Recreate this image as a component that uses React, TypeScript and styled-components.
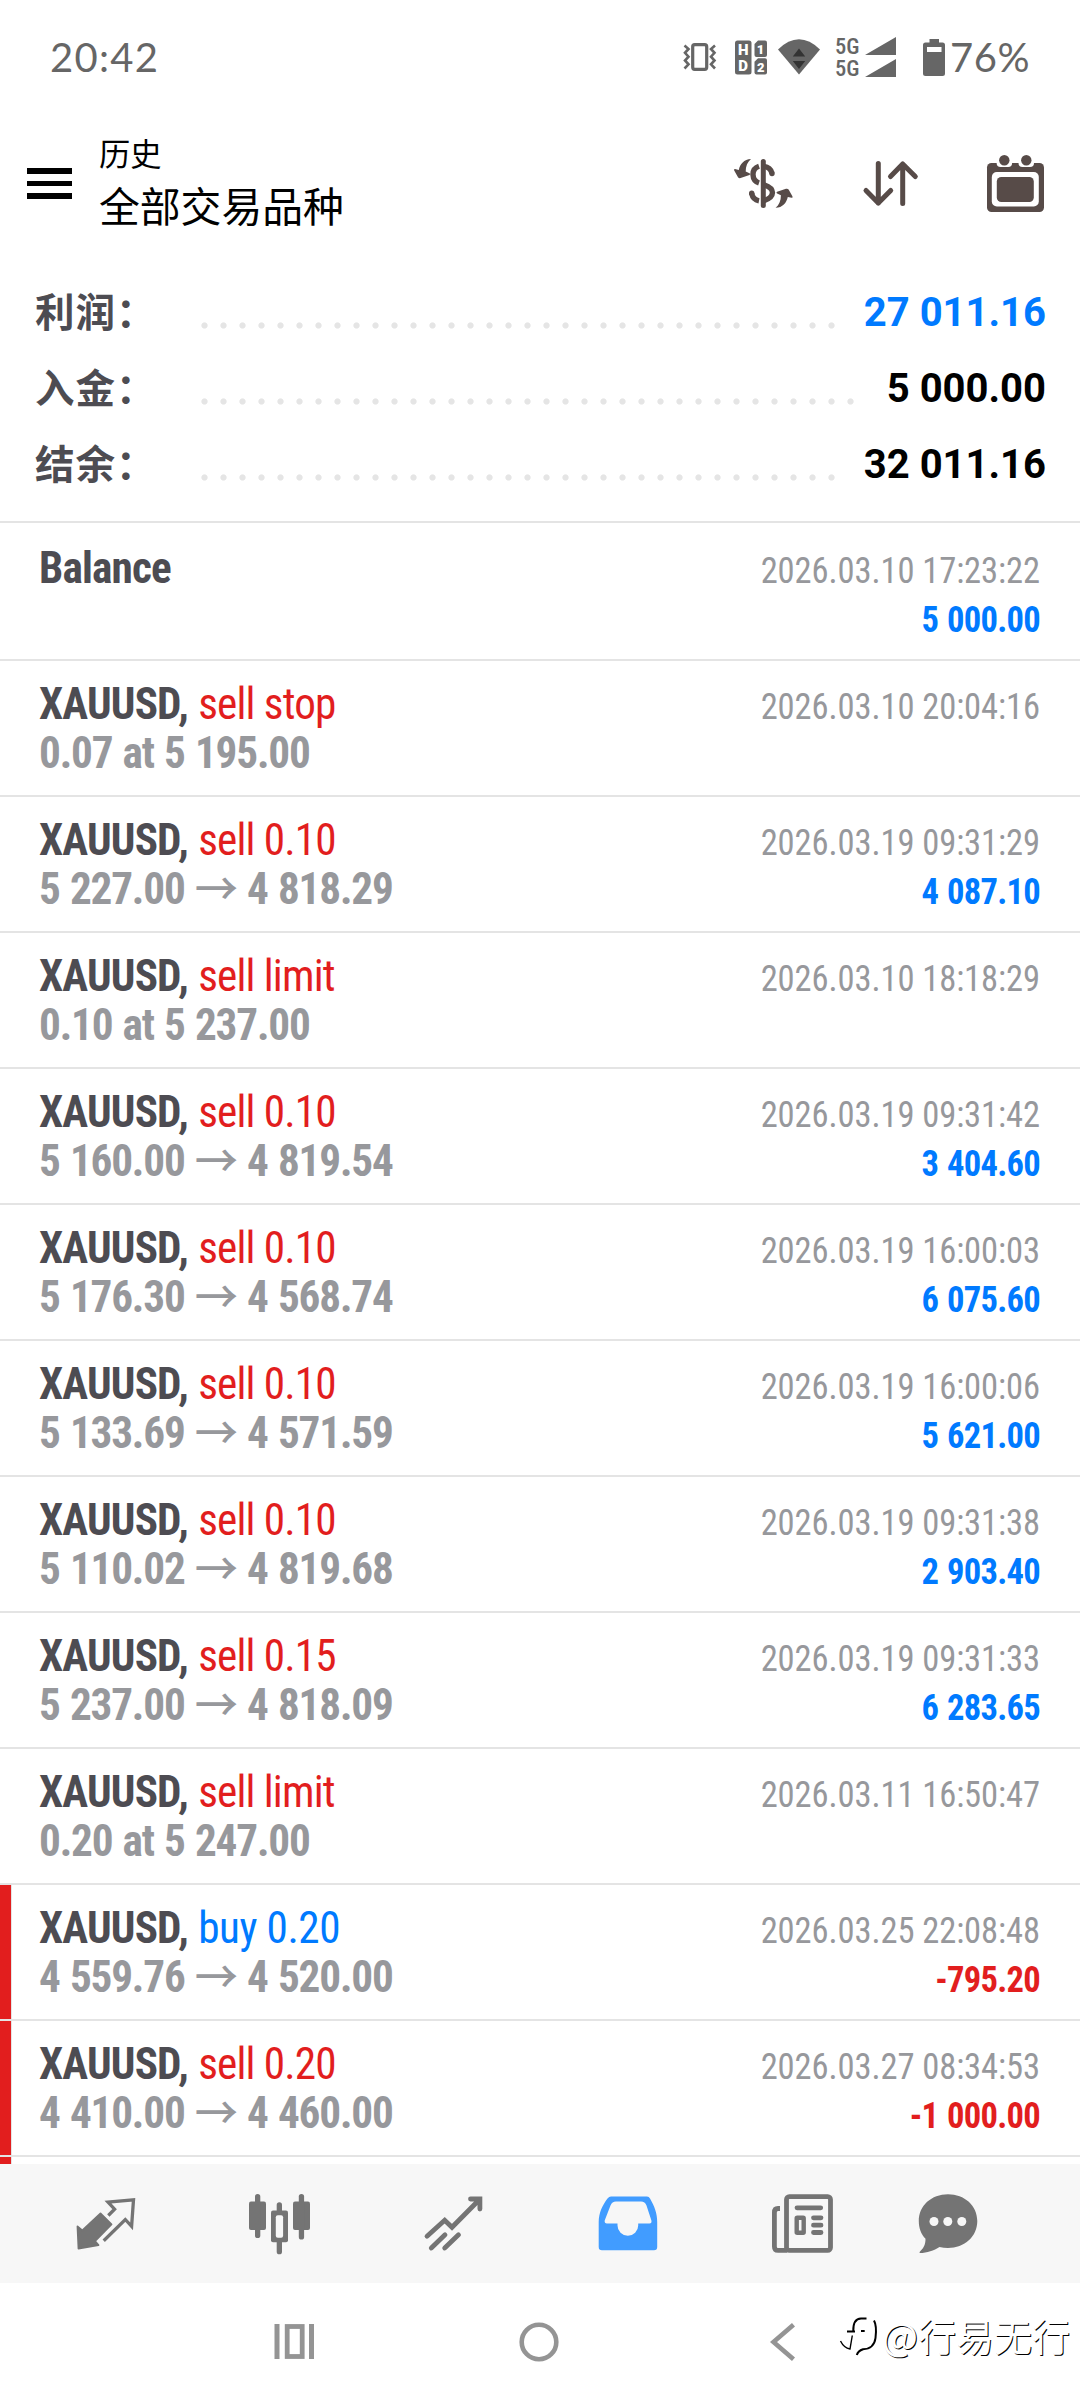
import React from "react";
import styled, { createGlobalStyle } from "styled-components";

const BLUE = "#007aff";
const RED = "#e21e1e";
const LINE = "#e4e4e4";
const STATUS = "#666666";
const TOOL = "#574b48";
const TAB = "#747474";
const KEY = "#949494";

const CJK = `"Noto Sans CJK SC", "Noto Sans", sans-serif`;
const CONDENSED = `"Roboto Condensed", Roboto, sans-serif`;

const GlobalStyle = createGlobalStyle`
  * { box-sizing: border-box; }
  body { margin: 0; background: #fff; }
  svg { display: block; flex: none; overflow: visible; }
`;

const Screen = styled.main`
  position: relative;
  display: flex;
  flex-direction: column;
  width: 1080px;
  height: 2400px;
  overflow: hidden;
  background: #fff;
  white-space: nowrap;
`;

/* ---------- status bar ---------- */

const StatusBar = styled.header`
  display: flex;
  align-items: center;
  flex: none;
  height: 114px;
  padding: 0 50px;
  color: ${STATUS};
`;

const StatusText = styled.span<{ $spacing: number; $width?: number }>`
  width: ${(p) => (p.$width ? `${p.$width}px` : "auto")};
  font: 400 40px/40px Lato, sans-serif;
  letter-spacing: ${(p) => p.$spacing}px;
`;

const StatusIcons = styled.div`
  display: flex;
  align-items: center;
  margin-left: auto;
`;

const Slot = styled.div<{ $gap: number }>`
  margin-left: ${(p) => p.$gap}px;
`;

const Network = styled.div`
  display: flex;
  flex-direction: column;
  width: 26px;
  margin-left: 15px;
  font: 500 22.5px/22px ${CONDENSED};
`;

/* ---------- app bar ---------- */

const AppBar = styled.div`
  display: flex;
  align-items: center;
  flex: none;
  height: 139px;
  padding: 0 36px 0 27px;
`;

const MenuButton = styled.div`
  display: flex;
  flex-direction: column;
  gap: 7px;
  width: 45px;
`;

const MenuLine = styled.span`
  height: 5.5px;
  background: #000;
`;

const Titles = styled.div`
  display: flex;
  flex-direction: column;
  gap: 4px;
  margin-left: 27px;
  padding-bottom: 2px;
  font-family: ${CJK};
  color: #000;
`;

const Overline = styled.span`
  font-size: 31.3px;
  line-height: 40px;
`;

const Title = styled.span`
  font-size: 40.8px;
  line-height: 56px;
`;

const Tools = styled.div`
  display: flex;
  align-items: center;
  gap: 69px;
  margin-left: auto;
  padding-bottom: 1px;
  color: ${TOOL};
`;

/* ---------- summary ---------- */

const Summary = styled.section`
  flex: none;
  height: 270px;
  padding: 21px 34px 0 35px;
  border-bottom: 2px solid ${LINE};
`;

const SummaryRow = styled.div`
  display: flex;
  align-items: center;
  height: 76px;
`;

const SummaryLabel = styled.span`
  width: 159.5px;
  padding-bottom: 4px;
  font: 700 39.5px/50px ${CJK};
  letter-spacing: 1px;
  color: #4d4c52;
`;

const Leader = styled.div`
  flex: 1;
  margin-top: 26px;
`;

const Dots = styled.div`
  width: round(down, 100%, 19px);
  height: 7px;
  background: radial-gradient(circle at 50% 50%, #e5e5e5 2.7px, transparent 3.5px) 0 0 / 19px 7px repeat-x;
`;

const SummaryValue = styled.span<{ $blue?: boolean }>`
  margin-left: 15px;
  padding-top: 2px;
  font: 700 40px/50px Roboto, sans-serif;
  color: ${(p) => (p.$blue ? BLUE : "#000")};
`;

/* ---------- history list ---------- */

const List = styled.section`
  flex: 1;
  min-height: 0;
  overflow: hidden;
`;

const Item = styled.article<{ $first?: boolean }>`
  display: flex;
  height: ${(p) => (p.$first ? 138 : 136)}px;
  padding-right: 40px;
  border-bottom: 2px solid ${LINE};
`;

const Marker = styled.span<{ $on?: boolean }>`
  width: 12px;
  border-right: 1px solid ${(p) => (p.$on ? LINE : "transparent")};
  background: ${(p) => (p.$on ? RED : "transparent")};
`;

const Column = styled.div<{ $top: number; $end?: boolean }>`
  display: flex;
  flex-direction: column;
  align-items: ${(p) => (p.$end ? "flex-end" : "flex-start")};
  margin-left: ${(p) => (p.$end ? "auto" : "27px")};
  padding-top: ${(p) => p.$top}px;
  font-family: ${CONDENSED};
  line-height: 49px;
  transform: scaleX(0.96);
  transform-origin: ${(p) => (p.$end ? "right" : "left")};
`;

const Heading = styled.div`
  height: 49px;
  font-size: 45px;
`;

const Instrument = styled.span`
  font-weight: 700;
  letter-spacing: -0.86px;
  color: #4d4c52;
`;

const Kind = styled.span<{ $side: "buy" | "sell" }>`
  margin-left: 10.7px;
  letter-spacing: ${(p) => (p.$side === "buy" ? -0.45 : -0.85)}px;
  color: ${(p) => (p.$side === "buy" ? BLUE : RED)};
`;

const Detail = styled.div`
  height: 49px;
  font-size: 45px;
  font-weight: 700;
  letter-spacing: -1.22px;
  word-spacing: 1.5px;
  color: #97989c;
`;

const Arrow = styled.span`
  font-family: ${CJK};
  font-weight: 500;
  line-height: 0;
  vertical-align: -2px;
`;

const Time = styled.time`
  font-size: 36px;
  letter-spacing: -0.1px;
  color: #97989c;
`;

const Amount = styled.span<{ $loss?: boolean }>`
  font-size: 36px;
  font-weight: 700;
  letter-spacing: -0.75px;
  word-spacing: 1.5px;
  color: ${(p) => (p.$loss ? RED : BLUE)};
`;

/* ---------- bottom bars ---------- */

const TabBar = styled.nav`
  display: grid;
  grid-template-columns: 174px 174px 174px 174px 146px 60px;
  align-items: center;
  flex: none;
  height: 119px;
  padding-left: 76px;
  background: #f7f7f7;
  color: ${TAB};
`;

const SystemBar = styled.footer`
  display: flex;
  align-items: center;
  flex: none;
  height: 117px;
  padding-left: 274px;
  color: ${KEY};
`;

const Watermark = styled.div`
  position: absolute;
  right: 10px;
  bottom: 40px;
  display: flex;
  align-items: center;
  gap: 5px;
  color: #fff;
  font: 400 38px/50px ${CJK};
  text-shadow: 1px 1px 0.5px #000;
`;

/* ---------- icons ---------- */

const VibrateIcon = () => (
  <svg width="34" height="28" fill="none" stroke="currentColor">
    <rect x="9.7" y="1.7" width="14" height="24.6" rx="2" strokeWidth="3.2" />
    <path d="M1.5 2.5 5.5 6 2 9.8 5.5 13.7 2 17.5 5.5 21.3 1.5 25.5" strokeWidth="2.6" />
    <path d="M32 2.5 28 6 31.5 9.8 28 13.7 31.5 17.5 28 21.3 32 25.5" strokeWidth="2.6" />
  </svg>
);

const HdIcon = () => (
  <svg width="33" height="35" fill="currentColor">
    <rect x="1" y="0.5" width="16.5" height="34" rx="2.5" />
    <path d="M24 0.5h7a2 2 0 0 1 2 2v12.500a2 2 0 0 1-2 2h-8.500a2 2 0 0 1-2-2v-11z" />
    <path d="M24 18.300h7a2 2 0 0 1 2 2v12.200a2 2 0 0 1-2 2h-8.500a2 2 0 0 1-2-2v-10.700z" />
    <g fill="#fff" fontFamily="Roboto, sans-serif" fontWeight="900" fontSize="15" textAnchor="middle">
      <text x="9.2" y="14.5">H</text>
      <text x="9.2" y="31">D</text>
      <text x="26.5" y="13.5" fontSize="13">1</text>
      <text x="26.7" y="31.5" fontSize="13">2</text>
    </g>
  </svg>
);

const WifiIcon = () => (
  <svg width="42" height="36" fill="currentColor">
    <path d="M0 10.5Q21-9.8 42 10.5L21 35.5Z" />
    <path d="M21 9.5 27.2 17.5H14.8ZM14.8 22H27.2L21 30Z" fill="#333" />
  </svg>
);

const SignalIcon = () => (
  <svg width="31" height="40" fill="currentColor">
    <path d="M0 18 31 0V18ZM0 40 31 22V40Z" />
  </svg>
);

const BatteryIcon = () => (
  <svg width="22" height="37" fill="currentColor">
    <path d="M6.500 0h9.500v3.500h3.500a2.500 2.500 0 0 1 2.500 2.500v28.500a2.500 2.500 0 0 1-2.500 2.500h-17a2.500 2.500 0 0 1-2.500-2.500v-28.500a2.500 2.500 0 0 1 2.500-2.500h4z" />
    <rect x="4" y="8" width="14.5" height="5" fill="#fff" />
  </svg>
);

const turn = "M18 1C11 1.2 7 6.2 5.8 11.9L2 11Q0.3 11 1.2 12.6L5 19.3Q6 20.5 7.6 20L16.5 17Q18 16 16.5 15.2L12.7 13.6C12.7 8 14.5 4 18 1Z";

const DollarIcon = () => (
  <svg width="61" height="51" fill="none" stroke="currentColor" strokeWidth="5.4">
    <path d="M30.3 3.5V47.5" strokeWidth="5" strokeLinecap="round" />
    <path d="M26 8.2C17.5 11 18.5 22.5 26 25M31 8.4C36 9 38 11.5 39 15.2" />
    <circle cx="39" cy="15.5" r="2.7" fill="currentColor" stroke="none" />
    <path d="M31 26.7C42.5 30.5 42 39 31 42.6M18.7 35.5C19.5 39.5 22 42 26 42.8" />
    <circle cx="18.7" cy="35.2" r="2.7" fill="currentColor" stroke="none" />
    <path d={turn} fill="currentColor" stroke="none" />
    <path d={turn} fill="currentColor" stroke="none" transform="rotate(180 30.3 25.4)" />
  </svg>
);

const SortIcon = () => (
  <svg width="55" height="45" fill="none" stroke="currentColor" strokeWidth="5" strokeLinecap="round" strokeLinejoin="round">
    <path d="M15.3 2.5V42M3 29.5 15.3 42 27.7 29.5" />
    <path d="M39.7 42.5V3M27.5 15.5 39.7 3 52.3 15.5" />
  </svg>
);

const CalendarIcon = () => (
  <svg width="57" height="57" fill="currentColor">
    <rect x="0" y="8" width="57" height="49" rx="4.5" />
    <rect x="9.6" y="0" width="15.5" height="12" rx="4" fill="#fff" />
    <rect x="31.5" y="0" width="15.5" height="12" rx="4" fill="#fff" />
    <circle cx="17.3" cy="5.2" r="5.2" />
    <circle cx="39.3" cy="5.2" r="5.2" />
    <rect x="4.8" y="17" width="47" height="34.5" rx="5" fill="#fff" />
    <rect x="9.8" y="22" width="37" height="25" rx="4.5" />
  </svg>
);

const QuotesIcon = () => (
  <svg width="60" height="60" fill="currentColor">
    <path
      d="M1.5 32.5 6.3 36.5 24.5 19.5 35.5 30.3 19 47 22.5 51 2.5 54.5Z"
      stroke="currentColor"
      strokeWidth="1.8"
      strokeLinejoin="round"
    />
    <path d="M32.3 21.5 38.6 15.2 32 8 57.5 5.9 55.6 32.3 49.3 25.5 27.7 46.7" fill="none" stroke="currentColor" strokeWidth="3.3" />
  </svg>
);

const CandlesIcon = () => (
  <svg width="60" height="60" fill="currentColor">
    <rect x="-1" y="7.5" width="17" height="28.5" rx="2" />
    <rect x="5" y="0" width="5.3" height="44" rx="2.6" />
    <rect x="43" y="7.5" width="17" height="28.5" rx="2" />
    <rect x="48.8" y="0" width="5.3" height="45.5" rx="2.6" />
    <rect x="26.7" y="8.3" width="5.3" height="52" rx="2.6" />
    <rect x="21" y="16.5" width="17" height="31.7" rx="2" />
    <rect x="25.8" y="21.3" width="7.3" height="22.4" rx="2" fill="#f7f7f7" />
  </svg>
);

const TrendIcon = () => (
  <svg width="60" height="60" fill="none" stroke="currentColor" strokeWidth="4.8" strokeLinecap="round">
    <path d="M3 42.2 20.7 26.3 28 33.3 55.5 5.5M46.5 5H55.9V15" />
    <path d="M7.3 54 21 40.8M20.7 54 34.5 40.8" />
  </svg>
);

const InboxIcon = () => (
  <svg width="60" height="60" fill="#419cff">
    <path
      fillRule="evenodd"
      d="M13 2.5H49Q51 2.5 52 4.5C56.5 12.5 59.2 19 59.2 28V53Q59.2 56.3 56 56.3H4Q.7 56.3 .7 53V28C.7 19 4.5 11 9.5 4.5Q11 2.5 13 2.5ZM18 7.5Q14 7.5 12.5 11.5L6.7 26.5Q6.3 29.5 9 29.5H19.5V31.5A10.3 10.3 0 0 0 40.2 31.5V29.5H51.5Q54 29.5 53.4 26.5L48.5 11.5Q47 7.5 43 7.5Z"
    />
  </svg>
);

const NewsIcon = () => (
  <svg width="60" height="60" fill="none" stroke="currentColor" strokeWidth="4.8">
    <rect x="14.5" y="2.6" width="44" height="53.8" rx="2.8" />
    <path d="M8 14.5H6Q2.4 14.5 2.4 18.5V52.5Q2.4 56.4 6 56.4H15" />
    <path d="M25 13.8H48.7M41.5 23.8H49M41.5 31.2H49M41.5 38.5H49" strokeLinecap="round" />
    <rect x="24.7" y="23.8" width="7" height="15" rx="0.5" strokeWidth="4.4" />
  </svg>
);

const ChatIcon = () => (
  <svg width="60" height="60" fill="currentColor">
    <path d="M30 .2C46.5 .2 59.3 11.5 59.3 27S46.5 54 30 54Q25.5 54 21.5 53C16 56.5 9 59 2 59Q.8 58.5 2 57.5C6 54 7.5 50 7.5 44.8C3 40 .8 34 .8 27C.8 11.5 13.5 .2 30 .2Z" />
    <g fill="#f7f7f7">
      <circle cx="16" cy="27.5" r="4.5" />
      <circle cx="29.8" cy="27.5" r="4.5" />
      <circle cx="43.8" cy="27.5" r="4.5" />
    </g>
  </svg>
);

const RecentsIcon = () => (
  <svg width="40" height="35" fill="currentColor">
    <rect x="0.5" width="5" height="35" />
    <rect x="35" width="5" height="35" />
    <rect x="13.2" y="2.5" width="15" height="30" fill="none" stroke="currentColor" strokeWidth="4.8" />
  </svg>
);

const HomeIcon = () => (
  <svg width="40" height="40" fill="none" stroke="currentColor" strokeWidth="4.6">
    <circle cx="20" cy="20" r="17.3" />
  </svg>
);

const BackIcon = () => (
  <svg width="25" height="38" fill="none" stroke="currentColor" strokeWidth="4.6">
    <path d="M23.5 1.7 3.5 19 23.5 36.3" />
  </svg>
);

const WatermarkLogo = () => (
  <svg width="37" height="42" fill="none" stroke="#000" strokeWidth="2">
    <path d="M15 17.5H7M13.3 17Q13 5 21 4.6H26.5M21 17H24.7" />
    <path d="M12.3 21.5 10 35Q4 34 .5 27" strokeWidth="1.4" />
    <path d="M34 6.5Q37 12 35.5 24C34.5 32 29 35 23 35.3Q18 37 16.8 41" />
  </svg>
);

/* ---------- data ---------- */

const totals = [
  { label: "利润：", value: "27 011.16", blue: true },
  { label: "入金：", value: "5 000.00" },
  { label: "结余：", value: "32 011.16" },
];

type Entry = {
  kind?: string;
  from: string;
  to?: string;
  time: string;
  amount?: string;
};

const entries: Entry[] = [
  { kind: "sell stop", from: "0.07 at 5 195.00", time: "2026.03.10 20:04:16" },
  { kind: "sell 0.10", from: "5 227.00", to: "4 818.29", time: "2026.03.19 09:31:29", amount: "4 087.10" },
  { kind: "sell limit", from: "0.10 at 5 237.00", time: "2026.03.10 18:18:29" },
  { kind: "sell 0.10", from: "5 160.00", to: "4 819.54", time: "2026.03.19 09:31:42", amount: "3 404.60" },
  { kind: "sell 0.10", from: "5 176.30", to: "4 568.74", time: "2026.03.19 16:00:03", amount: "6 075.60" },
  { kind: "sell 0.10", from: "5 133.69", to: "4 571.59", time: "2026.03.19 16:00:06", amount: "5 621.00" },
  { kind: "sell 0.10", from: "5 110.02", to: "4 819.68", time: "2026.03.19 09:31:38", amount: "2 903.40" },
  { kind: "sell 0.15", from: "5 237.00", to: "4 818.09", time: "2026.03.19 09:31:33", amount: "6 283.65" },
  { kind: "sell limit", from: "0.20 at 5 247.00", time: "2026.03.11 16:50:47" },
  { kind: "buy 0.20", from: "4 559.76", to: "4 520.00", time: "2026.03.25 22:08:48", amount: "-795.20" },
  { kind: "sell 0.20", from: "4 410.00", to: "4 460.00", time: "2026.03.27 08:34:53", amount: "-1 000.00" },
];

const Deal = ({ kind = "", from, to, time, amount }: Entry) => {
  const loss = amount?.startsWith("-");
  return (
    <Item>
      <Marker $on={loss} />
      <Column $top={18}>
        <Heading>
          <Instrument>XAUUSD,</Instrument>
          <Kind $side={kind.startsWith("buy") ? "buy" : "sell"}>{kind}</Kind>
        </Heading>
        <Detail>
          {from}
          {to && (
            <>
              {" "}
              <Arrow>→</Arrow> {to}
            </>
          )}
        </Detail>
      </Column>
      <Column $top={22} $end>
        <Time>{time}</Time>
        {amount && <Amount $loss={loss}>{amount}</Amount>}
      </Column>
    </Item>
  );
};

export default function App() {
  return (
    <Screen>
      <GlobalStyle />
      <StatusBar>
        <StatusText $spacing={1.3}>20:42</StatusText>
        <StatusIcons>
          <VibrateIcon />
          <Slot $gap={17}><HdIcon /></Slot>
          <Slot $gap={11}><WifiIcon /></Slot>
          <Network>
            <span>5G</span>
            <span>5G</span>
          </Network>
          <Slot $gap={4}><SignalIcon /></Slot>
          <Slot $gap={27}><BatteryIcon /></Slot>
          <Slot $gap={5}><StatusText as="div" $spacing={0.6} $width={80}>76%</StatusText></Slot>
        </StatusIcons>
      </StatusBar>

      <AppBar>
        <MenuButton>
          <MenuLine />
          <MenuLine />
          <MenuLine />
        </MenuButton>
        <Titles>
          <Overline>历史</Overline>
          <Title>全部交易品种</Title>
        </Titles>
        <Tools>
          <DollarIcon />
          <SortIcon />
          <CalendarIcon />
        </Tools>
      </AppBar>

      <Summary>
        {totals.map((t) => (
          <SummaryRow key={t.label}>
            <SummaryLabel>{t.label}</SummaryLabel>
            <Leader><Dots /></Leader>
            <SummaryValue $blue={t.blue}>{t.value}</SummaryValue>
          </SummaryRow>
        ))}
      </Summary>

      <List>
        <Item $first>
          <Marker />
          <Column $top={20}>
            <Heading><Instrument>Balance</Instrument></Heading>
          </Column>
          <Column $top={24} $end>
            <Time>2026.03.10 17:23:22</Time>
            <Amount>5 000.00</Amount>
          </Column>
        </Item>
        {entries.map((e) => (
          <Deal key={e.kind + e.from + e.time} {...e} />
        ))}
        <Item>
          <Marker $on />
        </Item>
      </List>

      <TabBar>
        <QuotesIcon />
        <CandlesIcon />
        <TrendIcon />
        <InboxIcon />
        <NewsIcon />
        <ChatIcon />
      </TabBar>

      <SystemBar>
        <RecentsIcon />
        <Slot $gap={205}><HomeIcon /></Slot>
        <Slot $gap={211}><BackIcon /></Slot>
      </SystemBar>

      <Watermark>
        <WatermarkLogo />
        @行易无行
      </Watermark>
    </Screen>
  );
}
